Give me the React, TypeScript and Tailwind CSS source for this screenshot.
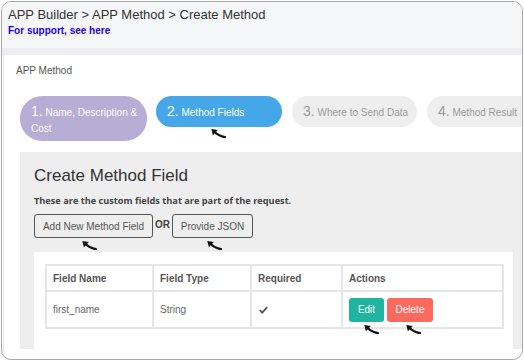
import React from "react";

const Arrow = ({ className }: { className?: string }) => (
  <svg width="15" height="9" viewBox="0 0 15 9" className={className} fill="none">
    <path d="M14 8.2 C10 7.6 6 5.6 3.2 2.6" stroke="#111" strokeWidth="2.2" strokeLinecap="round" />
    <path d="M0.3 0.1 L6.8 1.1 L1.9 6.2 Z" fill="#111" />
  </svg>
);

const steps = [
  { n: "1.", label: "Name, Description &", extra: "Cost", cls: "w-[127px] h-[45px] rounded-[22px] bg-[#b6aed5] text-white" },
  { n: "2.", label: "Method Fields", cls: "w-[126px] h-[31px] rounded-full bg-[#45a7e8] text-white" },
  { n: "3.", label: "Where to Send Data", cls: "w-[125px] h-[31px] rounded-full bg-[#eeeeee] text-[#9a9a9a]" },
  { n: "4.", label: "Method Result", cls: "w-[120px] h-[31px] rounded-full bg-[#eeeeee] text-[#9a9a9a]" },
];

const App = () => {
  return (
    <div className="w-[524px] h-[362px] bg-white overflow-hidden font-['Liberation_Sans',Arial,sans-serif]">
      <div className="ml-px mt-px w-[522px] h-[359px] border border-[#a8a8a8] rounded-[10px] overflow-hidden flex flex-col bg-white">
        <div className="h-[46px] shrink-0 bg-[#f5f6f8] px-[6px] pt-[5px]">
          <div className="text-[13px] leading-[16px] text-[#333]">APP Builder &gt; APP Method &gt; Create Method</div>
          <div className="mt-px text-[10px] leading-[13px] font-bold text-[#2200ee]">For support, see here</div>
        </div>
        <div className="h-[7px] shrink-0 bg-[#eceef1]" />
        <div className="flex-1 ml-px border-l border-[#e6e6e6] pl-[12px]">
          <div className="pt-[9px] text-[10px] leading-[13px] text-[#555]">APP Method</div>
          <div className="pl-[4px]">
            <div className="mt-[19px] flex items-start gap-[9px] whitespace-nowrap">
              {steps.map((s, i) => (
                <div key={i} className={`relative shrink-0 pl-[11px] pt-[7px] text-[10px] leading-[17px] ${s.cls} ${i > 1 ? "ml-px" : ""}`}>
                  <span className="text-[14px]">{s.n}</span> {s.label}
                  {s.extra && <span className="block -mt-px">{s.extra}</span>}
                  {i === 1 && <Arrow className="absolute left-[55px] top-[33px]" />}
                </div>
              ))}
            </div>
            <div className="mt-[11px] w-[507px] bg-[#eeeeee] pl-[14px] pt-[13px]">
              <div className="text-[17px] leading-[22px] text-[#333]">Create Method Field</div>
              <div className="mt-[8px] text-[9.2px] leading-[12px] font-bold text-[#444] font-['Open_Sans',sans-serif]">
                These are the custom fields that are part of the request.
              </div>
              <div className="mt-[7px] flex items-center">
                <div className="relative h-[24px] w-[119px] border border-[#555] rounded-[3px] flex items-center justify-center text-[10px] text-[#555]">
                  Add New Method Field
                  <Arrow className="absolute left-[47px] top-[26px]" />
                </div>
                <span className="mx-[2px] text-[10px] font-bold text-[#444] -mt-[3px]">OR</span>
                <div className="relative h-[24px] w-[81px] border border-[#555] rounded-[3px] flex items-center justify-center text-[10px] text-[#555]">
                  Provide JSON
                  <Arrow className="absolute left-[34px] top-[26px]" />
                </div>
              </div>
              <div className="mt-[14px] w-[479px] bg-white pl-[11px] pt-[12px] pb-[20px]">
                <table className="w-[457px] border-collapse text-[10px] table-fixed">
                  <colgroup>
                    <col className="w-[107px]" />
                    <col className="w-[98px]" />
                    <col className="w-[91px]" />
                    <col className="w-[161px]" />
                  </colgroup>
                  <thead>
                    <tr className="h-[26px]">
                      {["Field Name", "Field Type", "Required", "Actions"].map((h) => (
                        <th key={h} className="border-2 border-[#e6e6e6] px-[6px] text-left text-[10px] font-bold text-[#555]">
                          {h}
                        </th>
                      ))}
                    </tr>
                  </thead>
                  <tbody>
                    <tr className="h-[37px] text-[#666]">
                      <td className="border-2 border-[#e6e6e6] px-[6px]">first_name</td>
                      <td className="border-2 border-[#e6e6e6] px-[6px]">String</td>
                      <td className="border-2 border-[#e6e6e6] px-[7px]">
                        <svg width="9" height="8" viewBox="0 0 9 8" className="block">
                          <path d="M0.8 4.2 L3.2 6.6 L8.2 1.2" stroke="#555" strokeWidth="1.9" fill="none" />
                        </svg>
                      </td>
                      <td className="border-2 border-[#e6e6e6] px-[6px]">
                        <div className="flex gap-[3px]">
                          <div className="relative h-[24px] w-[35px] rounded-[3px] bg-[#1fb5a0] text-white flex items-center justify-center">
                            Edit
                            <Arrow className="absolute left-[15px] top-[27px]" />
                          </div>
                          <div className="relative h-[24px] w-[46px] rounded-[3px] bg-[#fb6a5e] text-white flex items-center justify-center">
                            Delete
                            <Arrow className="absolute left-[19px] top-[27px]" />
                          </div>
                        </div>
                      </td>
                    </tr>
                  </tbody>
                </table>
              </div>
            </div>
          </div>
        </div>
      </div>
    </div>
  );
};

export default App;
